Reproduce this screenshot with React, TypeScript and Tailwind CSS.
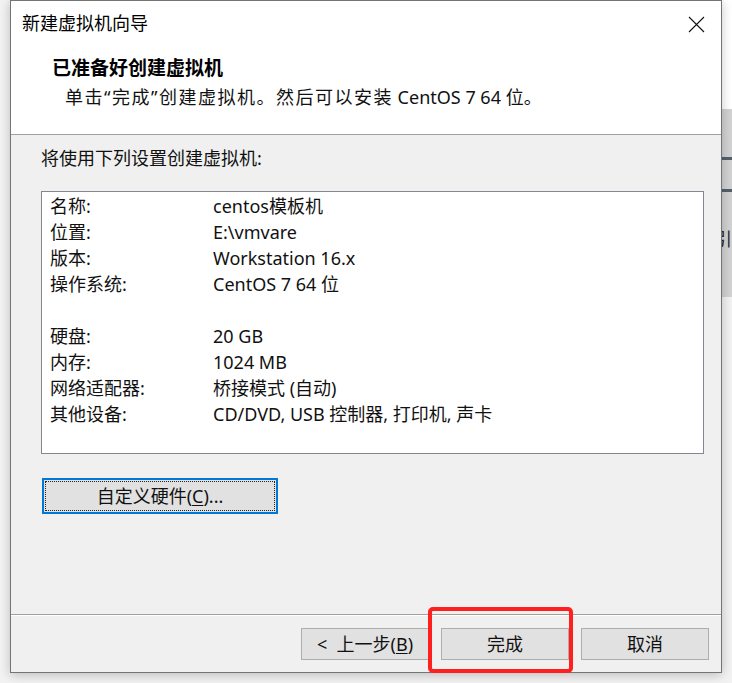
import type { ReactNode } from "react";

const FONT = "font-[family-name:'Noto_Sans','Noto_Sans_CJK_SC',sans-serif]";

const settings: { label: string; value: string }[] = [
  { label: "名称:", value: "centos模板机" },
  { label: "位置:", value: "E:\\vmvare" },
  { label: "版本:", value: "Workstation 16.x" },
  { label: "操作系统:", value: "CentOS 7 64 位" },
  { label: "", value: "" },
  { label: "硬盘:", value: "20 GB" },
  { label: "内存:", value: "1024 MB" },
  { label: "网络适配器:", value: "桥接模式 (自动)" },
  { label: "其他设备:", value: "CD/DVD, USB 控制器, 打印机, 声卡" },
];

const DialogButton = ({ children }: { children: ReactNode }) => (
  <button className="flex h-[32px] w-[128px] items-center justify-center border border-[#adadad] bg-[#e1e1e1] text-[18px] text-[#111]">
    {children}
  </button>
);

const App = () => {
  return (
    <div className={`relative h-[683px] w-[732px] overflow-hidden bg-[#f2f2f2] ${FONT}`}>
      {/* window behind the dialog, peeking out on the right */}
      <div className="absolute right-0 top-0 h-[297px] w-[20px] bg-white">
        <div className="mt-[109px] h-[188px] bg-[#d2d2d2]">
          <div className="h-[48px]" />
          <div className="h-[3px] bg-[#53606c]" />
          <div className="h-[29px]" />
          <div className="h-[3px] bg-[#53606c]" />
          <div className="pl-[2px] pt-[38px] text-[18px] leading-none text-[#222]">引</div>
        </div>
      </div>

      <div className="relative ml-[10px] flex h-[673px] w-[712px] flex-col border border-[#747474] bg-[#f0f0f0] shadow-[0_2px_10px_rgba(0,0,0,0.22)]">
        {/* header */}
        <div className="h-[133px] bg-white">
          <div className="flex h-[45px] items-center justify-between pl-[11px] pr-[16px]">
            <span className="text-[18px] text-black">新建虚拟机向导</span>
            <svg width="17" height="17" viewBox="0 0 17 17" className="mt-[1px]">
              <path d="M1 1 L16 16 M16 1 L1 16" stroke="#111" strokeWidth="1.1" fill="none" />
            </svg>
          </div>
          <div className="pl-[41px] pt-[9px] text-[19px] font-bold leading-[26px] text-black">
            已准备好创建虚拟机
          </div>
          <div className="pl-[54px] pt-[3px] text-[18px] leading-[26px] text-[#111]">
            <span className="tracking-[1.5px]">单击“完成”创建虚拟机。然后可以安装</span> CentOS 7 64 位。
          </div>
        </div>
        <div className="h-px bg-[#a0a0a0]" />

        {/* body */}
        <div className="flex-1 px-[30px] pt-[10px]">
          <div className="text-[18px] leading-[26px] text-[#111]">将使用下列设置创建虚拟机:</div>
          <div className="mt-[20px] h-[263px] w-[663px] border border-[#828790] bg-white pl-[8px] pt-px">
            {settings.map((row, index) => (
              <div className="flex h-[26px] items-center text-[18px] text-[#111]" key={index}>
                <span className="w-[163px]">{row.label}</span>
                <span>{row.value}</span>
              </div>
            ))}
          </div>
          <button className="ml-px mt-[24px] flex h-[36px] w-[236px] items-center justify-center border-2 border-[#0078d7] bg-[#e1e1e1] p-px">
            <span className="flex h-full w-full items-center justify-center border border-dotted border-[#222] text-[18px] text-[#111]">
              自定义硬件(<span className="underline underline-offset-2">C</span>)...
            </span>
          </button>
        </div>

        {/* footer */}
        <div className="h-px bg-[#a0a0a0]" />
        <div className="h-px bg-white" />
        <div className="flex h-[56px] items-center justify-end gap-[12px] pr-[12px]">
          <DialogButton>
            &lt;&nbsp; 上一步(<span className="underline underline-offset-2">B</span>)
          </DialogButton>
          <DialogButton>完成</DialogButton>
          <DialogButton>取消</DialogButton>
        </div>
      </div>

      {/* annotation box around the finish button */}
      <div className="absolute left-[428px] top-[607px] h-[66px] w-[145px] rounded-[5px] border-4 border-[#ff1f1f]" />
    </div>
  );
};

export default App;
